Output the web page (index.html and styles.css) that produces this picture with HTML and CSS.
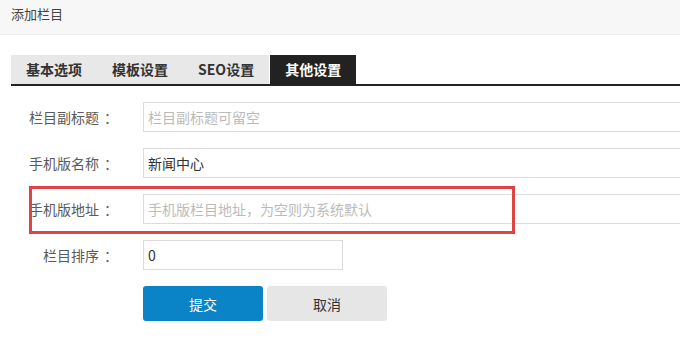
FILE: index.html
```html
<!DOCTYPE html>
<html lang="zh-CN">
<head>
<meta charset="utf-8">
<title>添加栏目</title>
<link rel="stylesheet" href="styles.css">
</head>
<body>
<div class="header">添加栏目</div>
<div class="tabs">
  <div class="tab">基本选项</div>
  <div class="tab">模板设置</div>
  <div class="tab">SEO设置</div>
  <div class="tab active">其他设置</div>
</div>
<form class="form">
  <label class="label">栏目副标题<span class="colon">：</span></label>
  <input class="input wide" type="text" placeholder="栏目副标题可留空">
  <label class="label">手机版名称<span class="colon">：</span></label>
  <input class="input wide" type="text" value="新闻中心">
  <label class="label">手机版地址<span class="colon">：</span></label>
  <input class="input wide" type="text" placeholder="手机版栏目地址，为空则为系统默认">
  <label class="label">栏目排序<span class="colon">：</span></label>
  <input class="input short" type="text" value="0">
  <div class="actions">
    <button class="btn primary" type="button">提交</button>
    <button class="btn cancel" type="button">取消</button>
  </div>
  <div class="highlight"></div>
</form>
</body>
</html>
```
FILE: styles.css
```css
html, body {
  margin: 0;
  padding: 0;
  overflow: hidden;
  background: #fff;
}
body {
  font-family: "Microsoft YaHei", "Noto Sans CJK SC", sans-serif;
  font-size: 14px;
  color: #333;
}
.header {
  box-sizing: border-box;
  height: 35px;
  padding: 5px 11px;
  line-height: 18px;
  font-size: 13px;
  color: #444;
  background: #f7f7f7;
  border-bottom: 1px solid #ececec;
}
.tabs {
  display: flex;
  margin: 20px 0 0 11px;
  border-bottom: 2px solid #222;
}
.tab {
  height: 29px;
  line-height: 29px;
  padding: 0 15px;
  background: #e8e8e8;
  color: #333;
  font-weight: bold;
}
.tab.active {
  background: #222;
  color: #fff;
  margin-left: 1px;
}
.form {
  position: relative;
  display: grid;
  grid-template-columns: 113px 1fr;
  column-gap: 30px;
  row-gap: 16px;
  align-items: center;
  margin: 16px 0 0 0;
}
.label {
  text-align: right;
  color: #5a5a5a;
  font-size: 14px;
  white-space: nowrap;
}
.colon {
  display: inline-block;
  padding-left: 5px;
  margin-right: -5px;
}
.input {
  box-sizing: border-box;
  height: 30px;
  padding: 0 4px;
  border: 1px solid #dcdcdc;
  font-family: inherit;
  font-size: 14px;
  color: #333;
  outline: none;
}
.input::placeholder {
  color: #bbb;
}
.input.wide {
  width: 100%;
  border-right: none;
}
.input.short {
  width: 200px;
}
.actions {
  grid-column: 2;
  display: flex;
  gap: 4px;
}
.btn {
  width: 120px;
  height: 35px;
  border: none;
  border-radius: 3px;
  font-family: inherit;
  font-size: 14px;
  cursor: pointer;
}
.btn.primary {
  background: #0a83c7;
  color: #fff;
}
.btn.cancel {
  background: #e6e6e6;
  color: #333;
}
.highlight {
  position: absolute;
  left: 29px;
  top: 84px;
  width: 486px;
  height: 48px;
  box-sizing: border-box;
  border: 3px solid #e04343;
  pointer-events: none;
}
```
